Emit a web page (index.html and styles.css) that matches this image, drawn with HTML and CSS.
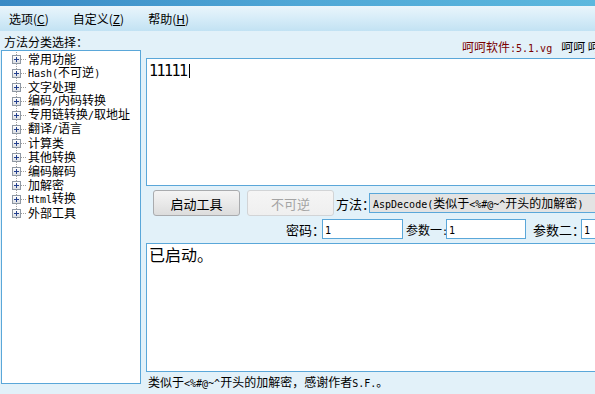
FILE: index.html
```html
<!DOCTYPE html>
<html>
<head>
<meta charset="utf-8">
<link rel="stylesheet" href="styles.css">
</head>
<body>
<div class="titlebar"></div>
<div class="menubar">
  <span class="menu">选项(<u>C</u>)</span>
  <span class="menu">自定义(<u>Z</u>)</span>
  <span class="menu">帮助(<u>H</u>)</span>
</div>
<div class="main">
  <div class="left">
    <div class="label">方法分类选择：</div>
    <div class="tree">
      <div class="node"><span class="gutter"><span class="exp"></span></span><span>常用功能</span></div>
      <div class="node"><span class="gutter"><span class="exp"></span></span><span><span class="m">Hash(</span>不可逆<span class="m">)</span></span></div>
      <div class="node"><span class="gutter"><span class="exp"></span></span><span>文字处理</span></div>
      <div class="node"><span class="gutter"><span class="exp"></span></span><span>编码<span class="m">/</span>内码转换</span></div>
      <div class="node"><span class="gutter"><span class="exp"></span></span><span>专用链转换<span class="m">/</span>取地址</span></div>
      <div class="node"><span class="gutter"><span class="exp"></span></span><span>翻译<span class="m">/</span>语言</span></div>
      <div class="node"><span class="gutter"><span class="exp"></span></span><span>计算类</span></div>
      <div class="node"><span class="gutter"><span class="exp"></span></span><span>其他转换</span></div>
      <div class="node"><span class="gutter"><span class="exp"></span></span><span>编码解码</span></div>
      <div class="node"><span class="gutter"><span class="exp"></span></span><span>加解密</span></div>
      <div class="node"><span class="gutter"><span class="exp"></span></span><span><span class="m">Html</span>转换</span></div>
      <div class="node"><span class="gutter"><span class="exp"></span></span><span>外部工具</span></div>
    </div>
  </div>
  <div class="right">
    <div class="info"><span class="red">呵呵软件<span class="m">:5.1.vg</span></span><span class="black">呵呵 呵呵</span></div>
    <div class="textbox top"><span class="big">11111</span><span class="caret"></span></div>
    <div class="row1">
      <div class="btn">启动工具</div>
      <div class="btn disabled">不可逆</div>
      <div class="lbl method">方法：</div>
      <div class="combo"><span class="m">AspDecode(</span>类似于<span class="m">&lt;%#@~^</span>开头的加解密<span class="m">)</span></div>
    </div>
    <div class="row2">
      <div class="lbl pw">密码：</div>
      <div class="field f1"><span class="m">1</span></div>
      <div class="lbl p1">参数一<span class="m">:</span></div>
      <div class="field f2"><span class="m">1</span></div>
      <div class="lbl p2">参数二：</div>
      <div class="field f3"><span class="m">1</span></div>
    </div>
    <div class="textbox bottom"><span class="out">已启动。</span></div>
    <div class="status">类似于<span class="m">&lt;%#@~^</span>开头的加解密，感谢作者<span class="m">S.F.</span>。</div>
  </div>
</div>
</body>
</html>
```

FILE: styles.css
```css
* { box-sizing: border-box; }
html, body { margin: 0; padding: 0; }
body {
  width: 595px;
  height: 394px;
  overflow: hidden;
  background: #e2f1f9;
  font-family: "Noto Sans CJK SC", sans-serif;
  font-size: 12px;
  color: #000;
}
.m {
  font-family: "DejaVu Sans Mono", monospace;
  font-size: 10px;
}
.titlebar {
  height: 6px;
  background: linear-gradient(to right, #3a8ac5, #4fa7d6 50%, #5cb8de);
}
.menubar {
  height: 25px;
  display: flex;
  align-items: center;
  padding-left: 9px;
  gap: 24px;
  background: linear-gradient(#eaf5fb, #d6ecf8 50%, #c2e2f3);
  line-height: 16px;
}
.menu u { text-decoration: underline; text-underline-offset: 1px; }
.main {
  display: flex;
  height: 363px;
}
.left {
  width: 141px;
  flex: none;
  display: flex;
  flex-direction: column;
}
.label {
  height: 19px;
  padding: 2px 0 0 4px;
  line-height: 17px;
  white-space: nowrap;
}
.tree {
  margin-left: 1px;
  width: 140px;
  height: 334px;
  border: 1px solid #5aa7d9;
  background: #fff;
  padding-top: 1px;
}
.node {
  display: flex;
  align-items: center;
  height: 14px;
  line-height: 14px;
  white-space: nowrap;
}
.gutter {
  width: 26px;
  height: 14px;
  flex: none;
  display: flex;
  align-items: center;
  background:
    repeating-linear-gradient(to bottom, #a0a0a0 0 1px, transparent 1px 2px) 14px 0 / 1px 14px no-repeat,
    repeating-linear-gradient(to right, #a0a0a0 0 1px, transparent 1px 2px) 19px 7px / 6px 1px no-repeat;
}
.exp {
  margin-left: 10px;
  width: 9px;
  height: 9px;
  border: 1px solid #8f98a3;
  background:
    linear-gradient(#24408e, #24408e) center / 5px 1px no-repeat,
    linear-gradient(#24408e, #24408e) center / 1px 5px no-repeat,
    linear-gradient(#ffffff, #dcdfe3);
}
.right {
  margin-left: 5px;
  width: 449px;
  flex: none;
  display: flex;
  flex-direction: column;
  overflow: hidden;
}
.right > * { width: 470px; flex: none; }
.info {
  height: 27px;
  padding: 9px 0 0 316px;
  line-height: 14px;
  white-space: nowrap;
  display: flex;
  overflow: hidden;
}
.red { color: #7a0000; }
.black { margin-left: 9px; }
.textbox {
  border: 1px solid #5aa7d9;
  background: #fff;
  padding: 3px 2px;
}
.top {
  height: 128px;
  display: flex;
  align-items: flex-start;
}
.big {
  font-family: "DejaVu Sans Mono", monospace;
  font-size: 15px;
  letter-spacing: -1.5px;
  line-height: 16px;
  margin-top: 1px;
}
.caret {
  width: 1px;
  height: 14px;
  background: #000;
  margin: 2px 0 0 2px;
}
.row1 {
  margin-top: 4px;
  height: 26px;
  display: flex;
  align-items: center;
  white-space: nowrap;
}
.row1 > *, .row2 > * { flex: none; }
.btn {
  width: 87px;
  height: 26px;
  margin-left: 7px;
  border: 1px solid #a9abae;
  border-radius: 3px;
  background: linear-gradient(#f4f4f4, #e9e9e9 50%, #dcdcdc);
  display: flex;
  align-items: center;
  justify-content: center;
  font-size: 13px;
}
.btn.disabled {
  border-color: #d2d4d6;
  background: linear-gradient(#f5f5f5, #efefef);
  color: #a4a4a4;
}
.lbl { white-space: nowrap; }
.method {
  width: 33px;
  margin-left: 2px;
  font-size: 13px;
}
.combo {
  width: 250px;
  height: 20px;
  border: 1px solid #5aa7d9;
  background: #e3e3e3;
  padding-left: 3px;
  line-height: 18px;
  white-space: nowrap;
  overflow: hidden;
}
.row2 {
  margin-top: 3px;
  height: 20px;
  display: flex;
  align-items: center;
  white-space: nowrap;
}
.pw { margin-left: 140px; width: 36px; font-size: 13px; }
.p1 { width: 43px; padding-left: 3px; font-size: 12px; }
.p2 { width: 55px; padding-left: 7px; font-size: 13px; }
.field {
  height: 20px;
  border: 1px solid #5aa7d9;
  background: #fff;
  padding-left: 2px;
  line-height: 18px;
}
.f1 { width: 81px; }
.f2 { width: 80px; }
.f3 { width: 60px; }
.bottom {
  margin-top: 4px;
  height: 129px;
  padding: 1px 2px;
}
.out {
  font-size: 16px;
  line-height: 18px;
}
.status {
  height: 20px;
  line-height: 20px;
  padding-left: 2px;
  white-space: nowrap;
}
```
